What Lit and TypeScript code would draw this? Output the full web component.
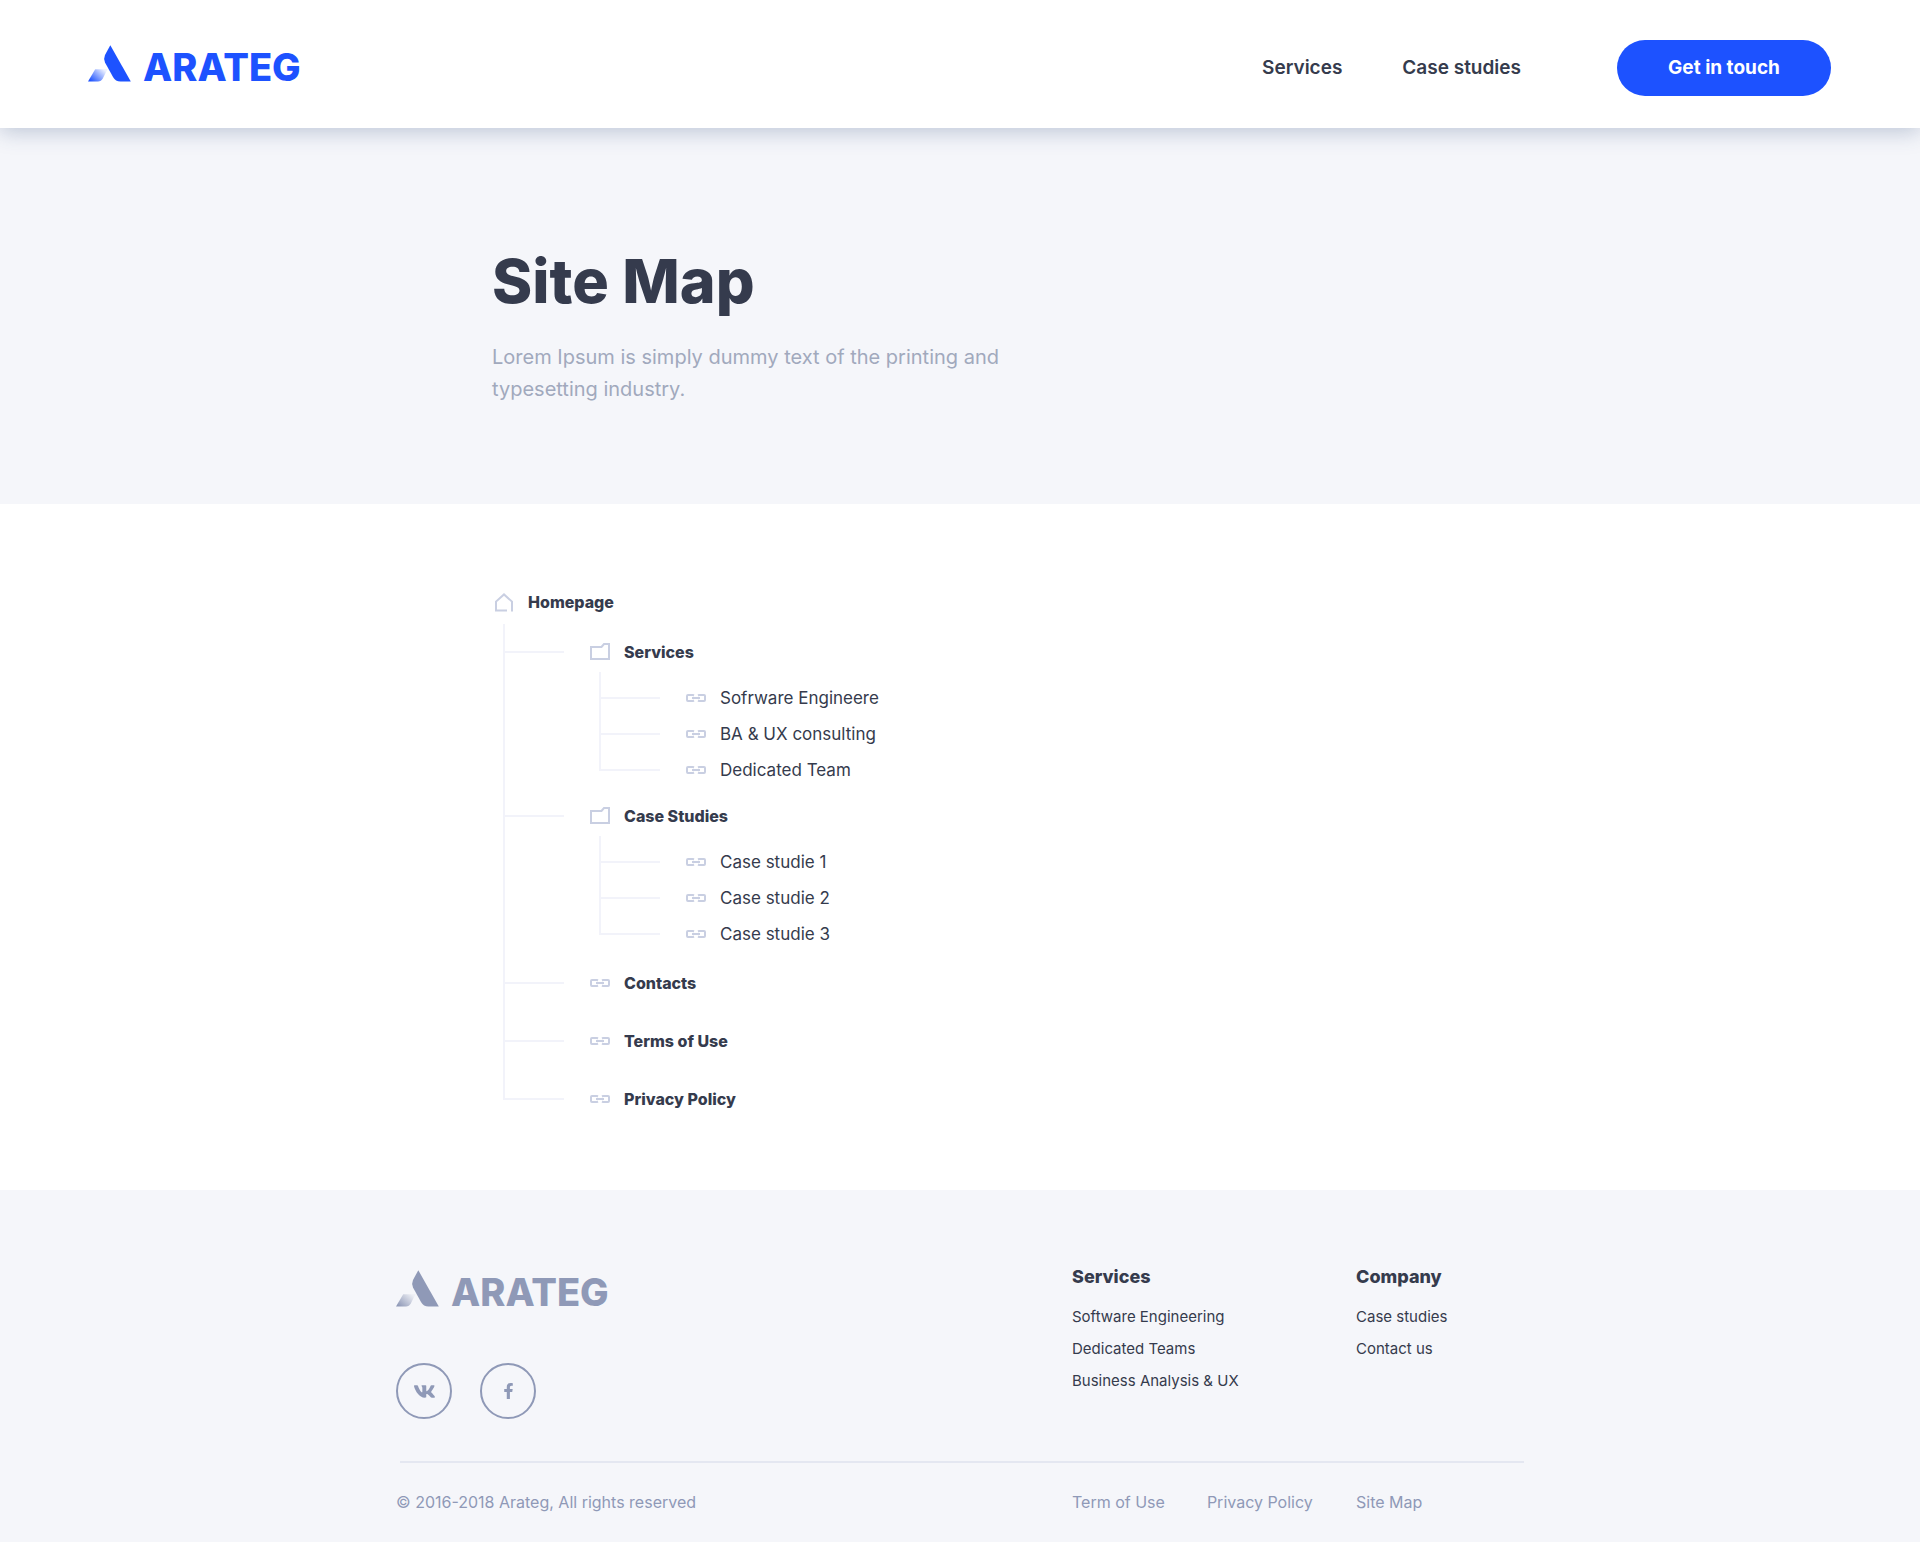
import { LitElement, html, svg, css, nothing } from "lit";
import { customElement, property } from "lit/decorators.js";

interface TreeNode {
  label: string;
  children?: TreeNode[];
}

const SITE_TREE: TreeNode[] = [
  {
    label: "Services",
    children: [{ label: "Sofrware Engineere" }, { label: "BA & UX consulting" }, { label: "Dedicated Team" }],
  },
  {
    label: "Case Studies",
    children: [{ label: "Case studie 1" }, { label: "Case studie 2" }, { label: "Case studie 3" }],
  },
  { label: "Contacts" },
  { label: "Terms of Use" },
  { label: "Privacy Policy" },
];

const FOOTER_COLUMNS = [
  { title: "Services", links: ["Software Engineering", "Dedicated Teams", "Business Analysis & UX"] },
  { title: "Company", links: ["Case studies", "Contact us"] },
];

const homeIcon = html`<svg class="icon" width="18" height="19" viewBox="0 0 18 19" aria-hidden="true">
  ${svg`<path d="M12 17.5H1V8.6L9 1.4L17 8.6V18.5" />`}
</svg>`;

const folderIcon = html`<svg class="icon" width="20" height="18" viewBox="0 0 20 18" aria-hidden="true">
  ${svg`<path d="M1 16V4H11.500L14 1H19V16Z" />`}
</svg>`;

const linkIcon = html`<svg class="icon" width="20" height="8" viewBox="0 0 20 8" aria-hidden="true">
  ${svg`<path d="M8 1.500L7 1H2Q1 1 1 2V6Q1 7 2 7H7L8 6.500M12 1.500L13 1H18Q19 1 19 2V6Q19 7 18 7H13L12 6.500M6 4H14" />`}
</svg>`;

@customElement("brand-logo")
export class BrandLogo extends LitElement {
  static styles = css`
    :host {
      display: flex;
    }
    .logo {
      display: flex;
      align-items: flex-end;
      gap: 12px;
      color: inherit;
      text-decoration: none;
    }
    .mark {
      display: block;
      fill: currentColor;
    }
    .word {
      font: 800 38px/30px Inter, "Liberation Sans", sans-serif;
    }
  `;

  render() {
    return html`<a class="logo" href="#">
      <svg class="mark" width="43" height="37" viewBox="0 0 43 37" aria-hidden="true">
        <defs>
          <linearGradient id="fade" x1="0" y1="1" x2="1" y2="0.300">
            <stop offset="0.100" stop-color="currentColor" />
            <stop offset="1" stop-color="currentColor" stop-opacity="0.080" />
          </linearGradient>
        </defs>
        <path d="M22.300 0.300L42.800 36.500H32.500Q27.500 36.500 25 32L17 17.500Q15.300 14 17 10Z" />
        <path d="M0 36.500L7.200 24.200H19.500L14.800 33.500Q13.200 36.500 10 36.500Z" fill="url(#fade)" />
      </svg>
      <span class="word">ARATEG</span>
    </a>`;
  }
}

@customElement("site-tree")
export class SiteTree extends LitElement {
  @property({ attribute: false }) nodes: TreeNode[] = [];

  static styles = css`
    :host {
      display: block;
    }
    ul {
      list-style: none;
      margin: 0;
      padding: 0;
      background: linear-gradient(#f2f3fa, #f2f3fa) no-repeat 0 0;
    }
    .level-1 {
      margin-left: 11px;
      background-size: 2px calc(100% - 28px);
    }
    .level-2 {
      margin-left: 96px;
      padding-top: 8px;
      background-size: 2px calc(100% - 17px);
    }
    .folder {
      padding-top: 8px;
    }
    .folder + .leaf {
      margin-top: 2px;
    }
    .row {
      display: flex;
      align-items: center;
      height: 40px;
    }
    .root {
      height: 44px;
      padding-left: 3px;
    }
    .leaf > .row {
      height: 58px;
    }
    .level-2 > .leaf > .row {
      height: 36px;
    }
    .tick {
      width: 61px;
      height: 2px;
      margin-right: 26px;
      background: #f2f3fa;
    }
    .link {
      display: flex;
      align-items: center;
      gap: 14px;
      color: #353b4d;
      text-decoration: none;
      font: 800 16px/24px Inter, "Liberation Sans", sans-serif;
    }
    .root .link {
      gap: 15px;
    }
    .level-2 .link {
      font-weight: 400;
      font-size: 17px;
    }
    .icon {
      display: block;
      flex: none;
      fill: none;
      stroke: #c9cfe2;
      stroke-width: 2;
    }
  `;

  private renderLevel(nodes: TreeNode[], level: number): unknown {
    return html`<ul class="level-${level}">
      ${nodes.map(
        (node) => html`<li class=${node.children ? "folder" : "leaf"}>
          <div class="row">
            <span class="tick"></span>
            <a class="link" href="#">${node.children ? folderIcon : linkIcon}<span>${node.label}</span></a>
          </div>
          ${node.children ? this.renderLevel(node.children, level + 1) : nothing}
        </li>`
      )}
    </ul>`;
  }

  render() {
    return html`<div class="row root">
        <a class="link" href="#">${homeIcon}<span>Homepage</span></a>
      </div>
      ${this.renderLevel(this.nodes, 1)}`;
  }
}

@customElement("app-root")
export class AppRoot extends LitElement {
  static styles = css`
    :host {
      display: block;
      background: #fff;
      color: #353b4d;
      font-family: Inter, "Liberation Sans", sans-serif;
    }
    a {
      color: inherit;
      text-decoration: none;
    }
    .header {
      position: relative;
      display: flex;
      align-items: center;
      justify-content: space-between;
      box-sizing: border-box;
      height: 128px;
      padding: 0 89px 2px 88px;
      background: #fff;
      box-shadow: 0 4px 20px rgba(45, 75, 125, 0.28);
    }
    .brand {
      color: #1d52ff;
    }
    .nav {
      display: flex;
      align-items: center;
      gap: 60px;
      padding-top: 10px;
      font-size: 19px;
      line-height: 24px;
      font-weight: 600;
    }
    .cta {
      width: 214px;
      height: 56px;
      margin-left: 36px;
      padding: 0;
      border: 0;
      border-radius: 28px;
      background: #1d52ff;
      color: #fff;
      font: inherit;
      font-weight: 700;
      cursor: pointer;
    }
    .wrap {
      max-width: 1128px;
      margin: 0 auto;
    }
    .inset {
      padding-left: 96px;
    }
    .hero {
      padding: 115px 0 99px;
      background: #f5f6fa;
    }
    .title {
      margin: 0 0 22px;
      font-weight: 800;
      font-size: 61px;
      line-height: 76px;
    }
    .lead {
      max-width: 520px;
      margin: 0;
      color: #a1a9bd;
      font-size: 20px;
      line-height: 32px;
    }
    .map {
      padding: 76px 0 62px;
    }
    .footer {
      padding: 71px 0 24px;
      background: #f5f6fa;
      line-height: 32px;
    }
    .cols {
      display: grid;
      grid-template-columns: 1fr 284px 168px;
    }
    .about {
      padding-top: 9px;
      color: #8f99b7;
    }
    .social {
      display: flex;
      gap: 28px;
      margin-top: 56px;
    }
    .circle {
      display: flex;
      align-items: center;
      justify-content: center;
      box-sizing: border-box;
      width: 56px;
      height: 56px;
      border: 2px solid #8f99b7;
      border-radius: 50%;
    }
    .circle svg {
      fill: currentColor;
    }
    .heading {
      margin: 0 0 8px;
      font-weight: 800;
      font-size: 18px;
      line-height: 32px;
    }
    .list {
      list-style: none;
      margin: 0;
      padding: 0;
      font-size: 15px;
    }
    .rule {
      height: 0;
      margin: 42px 0 23px 4px;
      border: 0;
      border-top: 2px solid #e4e7f1;
    }
    .legal {
      color: #8f99b7;
      font-size: 16px;
    }
    .pair {
      display: flex;
      gap: 42px;
    }
  `;

  render() {
    return html`
      <header class="header">
        <brand-logo class="brand"></brand-logo>
        <nav class="nav">
          <a href="#">Services</a>
          <a href="#">Case studies</a>
          <button class="cta" type="button">Get in touch</button>
        </nav>
      </header>
      <main>
        <section class="hero">
          <div class="wrap">
            <div class="inset">
              <h1 class="title">Site Map</h1>
              <p class="lead">Lorem Ipsum is simply dummy text of the printing and typesetting industry.</p>
            </div>
          </div>
        </section>
        <section class="map">
          <div class="wrap">
            <site-tree class="inset" .nodes=${SITE_TREE}></site-tree>
          </div>
        </section>
      </main>
      <footer class="footer">
        <div class="wrap">
          <div class="cols">
            <div class="about">
              <brand-logo></brand-logo>
              <div class="social">
                <a class="circle" href="#" aria-label="VK">
                  <svg width="21" height="13" viewBox="18 96 540 320" aria-hidden="true">
                    <path d="M545 117.7c3.7-12.5 0-21.7-17.8-21.7h-58.9c-15 0-21.900 7.900-25.600 16.700 0 0-30 73.100-72.400 120.500-13.700 13.700-20 18.100-27.500 18.100-3.700 0-9.400-4.400-9.400-16.900V117.700c0-15-4.200-21.700-16.600-21.700h-92.600c-9.400 0-15 7-15 13.500 0 14.200 21.200 17.500 23.400 57.500v86.800c0 19-3.400 22.500-10.900 22.500-20 0-68.600-73.400-97.400-157.400-5.800-16.300-11.500-22.900-26.600-22.900H38.800c-16.800 0-20.200 7.900-20.200 16.700 0 15.600 20 93.100 93.100 195.500C160.400 378.100 229 416 291.400 416c37.500 0 42.100-8.400 42.100-22.900 0-66.800-3.400-73.100 15.400-73.100 8.700 0 23.700 4.400 58.700 38.100 40 40 46.600 57.900 69 57.900h58.900c16.800 0 25.300-8.400 20.400-25-11.200-34.900-86.900-106.700-90.300-111.500-8.700-11.200-6.200-16.200 0-26.200.1-.1 72-101.300 79.400-135.600z" />
                  </svg>
                </a>
                <a class="circle" href="#" aria-label="Facebook">
                  <svg width="9" height="16" viewBox="22 0 275 512" aria-hidden="true">
                    <path d="M279.140 288l14.220-92.660h-88.910v-60.130c0-25.350 12.420-50.060 52.240-50.060h40.420V6.260S260.430 0 225.360 0c-73.220 0-121.080 44.380-121.080 124.720v70.620H22.890V288h81.390v224h100.170V288z" />
                  </svg>
                </a>
              </div>
            </div>
            ${FOOTER_COLUMNS.map(
              (col) => html`<nav>
                <h2 class="heading">${col.title}</h2>
                <ul class="list">
                  ${col.links.map((text) => html`<li><a href="#">${text}</a></li>`)}
                </ul>
              </nav>`
            )}
          </div>
          <hr class="rule" />
          <div class="cols legal">
            <span>© 2016-2018 Arateg, All rights reserved</span>
            <div class="pair"><a href="#">Term of Use</a><a href="#">Privacy Policy</a></div>
            <a href="#">Site Map</a>
          </div>
        </div>
      </footer>
    `;
  }
}
